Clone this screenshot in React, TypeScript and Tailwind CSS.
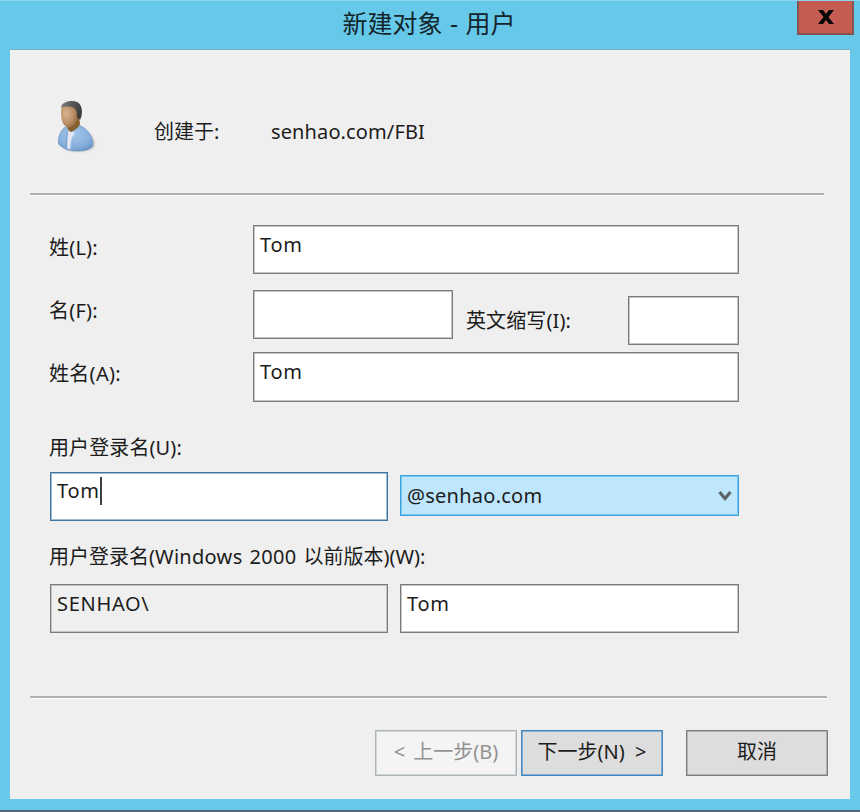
import clsx from 'clsx';

type FieldProps = {
  value?: string;
  className?: string;
  focused?: boolean;
  disabled?: boolean;
};

function Field({ value = '', className, focused, disabled }: FieldProps) {
  return (
    <div
      className={clsx(
        'flex shrink-0 items-start border pl-[6px] leading-[28px] tracking-[0.7px]',
        focused
          ? 'border-[#3f75a0] pt-[4px] shadow-[inset_0_0_0_1px_#9dbbd1]'
          : 'border-[#7b7b7b] pt-[5px] shadow-[inset_0_0_0_1px_#c3c3c3]',
        disabled ? 'bg-[#efefef]' : 'bg-white',
        className,
      )}
    >
      <span>{value}</span>
      {focused && <span className="h-[28px] w-[2px] bg-[#404040]" />}
    </div>
  );
}

function Separator({ className }: { className?: string }) {
  return <div className={clsx('h-[3px] shrink-0 border-t-2 border-[#b0b0b0] bg-white', className)} />;
}

function UserIcon() {
  return (
    <svg width="42" height="56" viewBox="0 0 42 56">
      <defs>
        <radialGradient id="face" cx="0.3" cy="0.4" r="0.8">
          <stop offset="0" stopColor="#d9b492" />
          <stop offset="0.55" stopColor="#b98e65" />
          <stop offset="1" stopColor="#805a33" />
        </radialGradient>
        <radialGradient id="shirt" cx="0.45" cy="0.35" r="0.75">
          <stop offset="0" stopColor="#a3c6ea" />
          <stop offset="0.65" stopColor="#86b0dc" />
          <stop offset="1" stopColor="#6590c0" />
        </radialGradient>
        <linearGradient id="hair" x1="0" y1="0" x2="1" y2="0.4">
          <stop offset="0" stopColor="#858585" />
          <stop offset="0.5" stopColor="#5a5a5a" />
          <stop offset="1" stopColor="#3c3c3c" />
        </linearGradient>
        <filter id="soft" x="-20%" y="-20%" width="140%" height="140%">
          <feGaussianBlur stdDeviation="1" />
        </filter>
      </defs>
      <path d="M30 33 C38 37 41 45 39 49 C34 54 18 55 9 51 Z" fill="#8c8c8c" opacity="0.5" filter="url(#soft)" />
      <path d="M12 28 C6 31 2.500 39 3.500 46 C8 51 15 53 22 53 C29 53 35 52 37.500 48 C39 39 33 31 24 27 Z" fill="url(#shirt)" stroke="#668db7" strokeWidth="0.6" />
      <path d="M13 32 L12 50 L15.500 51.500 C15.500 43 17 38 20 35 Z" fill="#e3e7f5" />
      <path d="M13 33 C11.500 38 11 44 11.500 49" fill="none" stroke="#668db7" strokeWidth="0.6" />
      <path d="M23 16 L25 25 C25 29 20 32 16 34 C14 33 13 32 12.500 30 L13 25 Z" fill="#89602f" />
      <path d="M6.500 9 C10 6 21 6 23 13 C24 20 21 29 14 29.500 C8 29 6 22 6 15 Z" fill="url(#face)" />
      <path d="M6 9 C7 4 14 2.500 19 3 C26 4 28 11 26.500 18 L25 22 L22 19 C22 15 22 12 19 10 C15 8 10 8.500 6 9 Z" fill="url(#hair)" />
    </svg>
  );
}

export default function App() {
  return (
    <div className="flex h-[812px] w-[860px] flex-col overflow-hidden border-b-2 border-t border-b-[#4d6876] border-t-[#8ad5ed] bg-[#66c9e9] font-['Noto_Sans','Noto_Sans_CJK_SC',sans-serif] text-[20px] text-[#1c1c1c]">
      <div className="flex h-[48px] shrink-0 items-start pr-[6px]">
        <h1 className="flex-1 pl-[61px] pt-[4px] text-center text-[25px] leading-[36px] text-[#14252c] [word-spacing:1px]">
          新建对象 - 用户
        </h1>
        <button className="flex h-[34px] w-[57px] items-center justify-center border-x-2 border-b-2 border-[#865450] bg-[#c45c51]">
          <svg width="16" height="14" viewBox="0 0 16 14">
            <path d="M0 0 H5 L8 4 L11 0 H16 L10.500 7 L16 14 H11 L8 10 L5 14 H0 L5.500 7 Z" fill="#080808" />
          </svg>
        </button>
      </div>

      <main className="mx-[10px] flex h-[750px] shrink-0 flex-col border-t border-[#7cabc0] bg-[#efefef] pl-[20px]">
        <div className="flex h-[143px] shrink-0 items-start">
          <div className="ml-[25px] mt-[48px]">
            <UserIcon />
          </div>
          <span className="ml-[57px] mt-[68px] w-[117px] leading-[28px]">创建于:</span>
          <span className="mt-[68px] leading-[28px] tracking-[0.12px]">senhao.com/FBI</span>
        </div>
        <Separator className="w-[794px]" />

        <div className="mt-[29px] flex h-[65px] shrink-0 items-start pl-[19px]">
          <label className="mt-[9px] w-[204px] leading-[28px] tracking-[0.2px]">姓(L):</label>
          <Field value="Tom" className="h-[49px] w-[486px]" />
        </div>
        <div className="flex h-[62px] shrink-0 items-start pl-[19px]">
          <label className="mt-[7px] w-[204px] leading-[28px] tracking-[0.2px]">名(F):</label>
          <Field className="h-[49px] w-[200px]" />
          <label className="ml-[13px] mt-[17px] w-[162px] leading-[28px] tracking-[0.1px]">英文缩写(I):</label>
          <Field className="mt-[6px] h-[49px] w-[111px]" />
        </div>
        <div className="flex h-[81px] shrink-0 items-start pl-[19px]">
          <label className="mt-[8px] w-[204px] leading-[28px] tracking-[0.3px]">姓名(A):</label>
          <Field value="Tom" className="h-[50px] w-[486px]" />
        </div>

        <label className="h-[39px] shrink-0 pl-[19px] pt-px leading-[28px] tracking-[0.1px]">用户登录名(U):</label>
        <div className="flex h-[71px] shrink-0 items-start pl-[20px]">
          <Field value="Tom" focused className="h-[49px] w-[338px]" />
          <div className="ml-[12px] mt-[3px] flex h-[41px] w-[339px] items-center justify-between border border-[#36a3dc] bg-[#bee6fd] pl-[6px] pr-[6px] shadow-[inset_0_0_0_1px_#7ac6ec]">
            <span className="leading-[28px] tracking-[0.25px]">@senhao.com</span>
            <svg width="14" height="12" viewBox="0 0 14 12">
              <path d="M1.500 2 L7 8.500 L12.500 2" fill="none" stroke="#5d6468" strokeWidth="3.200" />
            </svg>
          </div>
        </div>

        <label className="h-[41px] shrink-0 pl-[19px] leading-[28px]">
          用户登录名(<span className="tracking-[0.3px] [word-spacing:1.500px]">Windows 2000 </span>以前版本)(W):
        </label>
        <div className="flex h-[112px] shrink-0 items-start pl-[20px]">
          <Field value="SENHAO\" disabled className="h-[49px] w-[338px]" />
          <Field value="Tom" className="ml-[12px] h-[49px] w-[339px]" />
        </div>

        <Separator className="w-[797px]" />
        <div className="mt-[31px] flex h-[46px] w-[798px] shrink-0 justify-end pr-0 leading-[28px]">
          <button className="w-[142px] border border-[#adb5ba] bg-[#f4f4f4] pb-[2px] text-[#929292] shadow-[inset_0_0_0_1px_#d0d5d8] [word-spacing:3px]">
            &lt; 上一步(B)
          </button>
          <button className="ml-[4px] w-[142px] border border-[#4385bd] bg-[#dddddd] pb-[2px] shadow-[inset_0_0_0_1px_#85aed0] [word-spacing:5px]">
            下一步(N) &gt;
          </button>
          <button className="ml-[23px] w-[142px] border border-[#7b7b7b] bg-[#dddddd] pb-[2px] shadow-[inset_0_0_0_1px_#b3b3b3]">
            取消
          </button>
        </div>
      </main>
    </div>
  );
}
